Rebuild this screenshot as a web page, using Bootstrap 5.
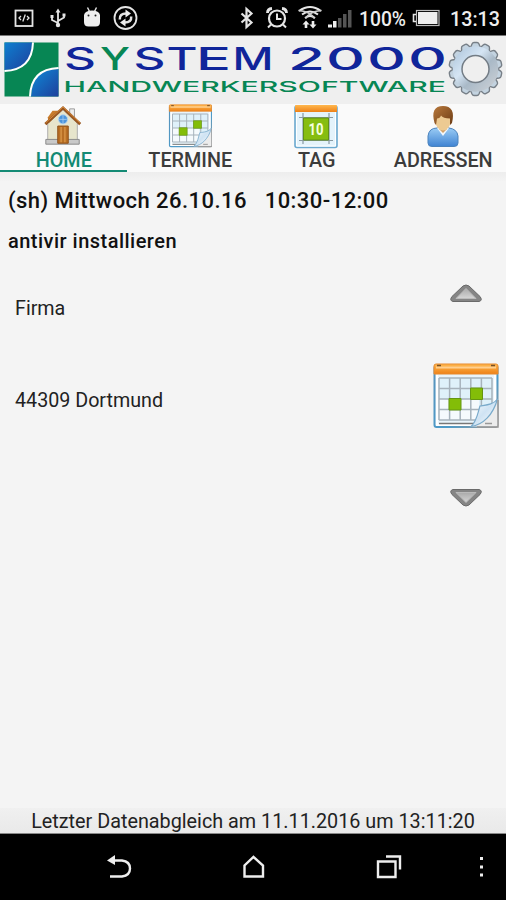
<!DOCTYPE html>
<html lang="de">
<head>
<meta charset="utf-8">
<meta name="viewport" content="width=device-width, initial-scale=1">
<title>System 2000 Handwerkersoftware</title>
<link href="https://cdn.jsdelivr.net/npm/bootstrap@5.3.0/dist/css/bootstrap.min.css" rel="stylesheet">
<style>
body{font-family:Roboto,"Liberation Sans",sans-serif;background:#f4f4f4;color:#111;line-height:1}
svg{display:block;flex:none}
.screen{height:900px;max-width:506px}
.status{height:36px;color:#eee;border-bottom:1px solid #777}
.brand-row{height:68px;background:#efefef}
.tabs{height:68px;background:#fafafa}
.tabs a{width:126.5px;height:68px;color:#3c3c3c;font-weight:500;font-size:19.8px;line-height:20px;text-decoration:none;border-bottom:0 solid #138a74}
.tabs a span{padding-top:1px;margin-left:1px}
.tabs a.active{color:#138a74;border-bottom-width:2px}
.strip{height:9px;background:linear-gradient(#ededed,#f3f3f3)}
.entry-title{font-size:22px;font-weight:500;white-space:pre;height:22px;line-height:24px;letter-spacing:.45px}
.entry-text{font-size:20px;font-weight:500;line-height:20px;letter-spacing:.48px;margin-top:20px}
.addr{font-size:19.7px;line-height:20px;color:#222}
.firm{margin-top:48px;margin-left:-1px}
.city{margin-top:72px;margin-left:-1px}
.sync{height:26px;background:linear-gradient(#f0f0f0,#e9e9e9);border-bottom:1px solid #888;font-size:19.8px;line-height:27px;color:#222}
.softkeys{height:66px}
.side{width:66px;margin-right:-1px}
.up{margin-top:32px}
.cal{margin-top:58px}
.down{margin-top:59px}
</style>
</head>
<body>
<svg width="0" height="0" class="position-absolute" aria-hidden="true">
 <defs>
  <linearGradient id="blue" x1="0" y1="0" x2="1" y2="1"><stop stop-color="#0e7fd0"/><stop offset="1" stop-color="#1e3f9c"/></linearGradient>
  <linearGradient id="blue2" x1="0" y1="0" x2="1" y2="1"><stop stop-color="#0e8bd8"/><stop offset="1" stop-color="#1e3f9c"/></linearGradient>
  <linearGradient id="orange" x1="0" y1="0" x2="0" y2="1"><stop stop-color="#ffb84f"/><stop offset="1" stop-color="#ee8117"/></linearGradient>
  <linearGradient id="steel" x1="0" y1="0" x2="1" y2="1"><stop stop-color="#b5cbe0"/><stop offset=".35" stop-color="#d5e5f4"/><stop offset=".6" stop-color="#a9b9c7"/><stop offset="1" stop-color="#c7cdd3"/></linearGradient>
  <linearGradient id="fold" x1="0" y1="0" x2="1" y2="1"><stop stop-color="#fff"/><stop offset=".5" stop-color="#cfe3f3"/><stop offset="1" stop-color="#fff"/></linearGradient>
  <linearGradient id="frame" x1="0" y1="0" x2="1" y2="1"><stop stop-color="#5a93bb"/><stop offset=".6" stop-color="#4c9ac8"/><stop offset="1" stop-color="#999"/></linearGradient>
  <linearGradient id="shirt" x1="0" y1="0" x2="0" y2="1"><stop stop-color="#9accf5"/><stop offset="1" stop-color="#3f83d2"/></linearGradient>
  <linearGradient id="hair" x1="0" y1="0" x2="1" y2="1"><stop stop-color="#b9793d"/><stop offset="1" stop-color="#6c3c14"/></linearGradient>
  <linearGradient id="grey" x1="0" y1="0" x2="0" y2="1"><stop stop-color="#aaa"/><stop offset="1" stop-color="#d5d5d5"/></linearGradient>
  <path id="tooth" d="M-5.500-20L-3.500-25Q-2.800-26.500-1.500-26.500h3Q2.800-26.500 3.500-25L5.500-20z"/>
  <g id="teeth7"><use href="#tooth"/><use href="#tooth" transform="rotate(25.714)"/><use href="#tooth" transform="rotate(51.429)"/><use href="#tooth" transform="rotate(77.143)"/><use href="#tooth" transform="rotate(102.857)"/><use href="#tooth" transform="rotate(128.571)"/><use href="#tooth" transform="rotate(154.286)"/></g>
  <symbol id="calendar" viewBox="0 0 66 66">
   <rect x="1.500" y="3" width="63" height="61" rx="2" fill="#e9f4fb" stroke="url(#frame)" stroke-width="2"/>
   <path d="M4 12v50h58V12" fill="none" stroke="#fff" stroke-width="2"/>
   <path d="M6 15h53v42H6z" fill="#dff1fa"/><path d="M6 36h40v21H6z" fill="#f5fafd"/>
   <path d="M6 15h53M6 25.500h53M6 36h53M6 46.500h42M6 57h36M6 15v42M16.600 15v42M27.200 15v42M37.800 15v42M48.400 15v34M59 15v25" fill="none" stroke="#a7b3bc" stroke-width="1.500"/>
   <path d="M6 60.500h53" stroke="#777" stroke-width="1.500"/>
   <path d="M16 35.500h12v11.500H16zM37.500 25h12v11.500h-12z" fill="#83bd08" stroke="#659612"/>
   <path d="M64.500 36C60 42 53 42 47 43c-2 6-3 15-9 20.500h25q2 0 2-2z" fill="#ececec"/>
   <path d="M64.500 36C60 42 53 42 47 43c-2 6-3 15-9 20.500C50 62 60 52 64.500 36z" fill="url(#fold)" stroke="#79aacb" stroke-width="1.200"/>
   <path d="M52 60.500h7M65 37v27H44" fill="none" stroke="#999" stroke-width="1.500"/>
   <path d="M3 1h60q2 0 2 2v8H1V3q0-2 2-2z" fill="url(#orange)" stroke="#e88b2f"/>
   <path d="M3 4.500h60" stroke="#ffcf8e" stroke-width="2"/><path d="M4 2.500h4M58 2.500h4" stroke="#775026" stroke-width="1.500"/>
  </symbol>
 </defs>
</svg>
<main class="screen d-flex flex-column overflow-hidden">
 <header class="status bg-black">
  <svg width="506" height="35" viewBox="0 0 506 35" fill="none" stroke="#e5e5e5" stroke-width="1.800" font-family="Roboto,sans-serif">
   <rect x="15.500" y="10.500" width="17" height="15.500"/><path d="M21 16l-2 2 2 2M27 16l2 2-2 2M25.300 14.500l-2.500 7" stroke-width="1.300"/>
   <path d="M58 11v14M52 17v3l6 3M64 15v2.500l-6 3.500" stroke-width="1.800"/><path d="M55.500 12.500L58 8.500l2.500 4zM50.500 15h3v3h-3zM62.500 13.500h3v3h-3z" fill="#e5e5e5" stroke="none"/><circle cx="58" cy="25" r="2.200" fill="#e5e5e5" stroke="none"/>
   <path d="M84 15q1-4.500 8-4.500t8 4.500v7q0 4.500-4.500 4.500h-7Q84 26.500 84 22z" fill="#eee" stroke="none"/><path d="M87.500 7.500l2 4M96.500 7.500l-2 4" stroke-width="1.400"/><circle cx="88.500" cy="15.500" r="1" fill="#222" stroke="none"/><circle cx="95.500" cy="15.500" r="1" fill="#222" stroke="none"/>
   <circle cx="125.500" cy="18" r="11"/><path d="M119.800 19.500q-.5-6 6.500-6M131.200 16.500q.5 6-6.500 6" stroke-width="2.500"/><path d="M125.500 9.500l5.500 4-5.500 4zM125.500 18.500l-5.500 4 5.500 4z" fill="#eee" stroke="none"/>
   <path d="M241.500 13.500l10 9-5 4.500V9l5 4.500-10 9" stroke-width="2.200"/>
   <circle cx="277" cy="18.500" r="8" stroke-width="2.200"/><path d="M277 13.500V19h4.500M271 24.500l-3 3M283 24.500l3 3" stroke-width="2"/><path d="M267.500 13q0-4 4.500-4.500M286.500 13q0-4-4.500-4.500" stroke-width="2.800"/>
   <path d="M299 11q11-8 22 0M302 14.500q8-6 16 0M305 18q5-4 10 0" stroke-width="2"/><path d="M298.500 10.500q11 .5 16 8M321.500 10.500q-11 .5-16 8" stroke="#ccc" stroke-width="1.400"/>
   <path d="M302.500 24.500l3.500-4 3.500 4h-2.200v3.500h-2.600v-3.500zM311.700 21h2.600v3.500h2.200l-3.500 4-3.500-4h2.200z" fill="#eee" stroke="none"/>
   <path d="M328 24.500h4v3h-4zM333 21h3.500v6.500H333z" fill="#eee" stroke="none"/><path d="M338 18h3.500v9.500H338zM343 14h3.500v13.500H343zM348 10h3.500v17.500H348z" fill="#555" stroke="none"/>
   <rect x="416.500" y="10.500" width="22.500" height="15" stroke-width="1.200" stroke="#bbb"/><path d="M418 12h19.500v12H418z" fill="#eee" stroke="none"/><path d="M416 14.500h-2.500v7h2.500" stroke-width="1.600"/>
   <g fill="#eee" stroke="none" font-weight="500"><text x="359" y="26" font-size="19.500" textLength="47" lengthAdjust="spacingAndGlyphs">100%</text><text x="450" y="26" font-size="20" textLength="50" lengthAdjust="spacingAndGlyphs">13:13</text></g>
  </svg>
 </header>
 <div class="brand-row">
  <svg width="506" height="68" viewBox="0 36 506 68">
   <path d="M4.500 42.500h54v54h-54z" fill="#078654"/>
   <path d="M4.500 42.500H32Q32 70 4.500 70z" fill="url(#blue)"/><path d="M58.500 96.500H31Q32 69 58.500 69z" fill="url(#blue2)"/>
   <path d="M33 42.500Q32 70 4.500 71M30 96.500Q31 69 58.500 68" fill="none" stroke="#fff" stroke-width="2"/>
   <g font-family="Inter,sans-serif" font-size="31" font-weight="500" fill="#10259a">
    <text y="70" x="64" textLength="32" lengthAdjust="spacingAndGlyphs">S</text>
    <text y="70" x="100" textLength="30" lengthAdjust="spacingAndGlyphs" fill="#078654">Y</text>
    <text y="70" x="133.500" textLength="32" lengthAdjust="spacingAndGlyphs">S</text>
    <text y="70" x="166.500" textLength="31" lengthAdjust="spacingAndGlyphs">T</text>
    <text y="70" x="196" textLength="35" lengthAdjust="spacingAndGlyphs">E</text>
    <text y="70" x="232.500" textLength="41" lengthAdjust="spacingAndGlyphs">M</text>
    <text y="70" x="288" textLength="37" lengthAdjust="spacingAndGlyphs">2</text>
    <text y="70" x="326" textLength="39" lengthAdjust="spacingAndGlyphs">0</text>
    <text y="70" x="367" textLength="39" lengthAdjust="spacingAndGlyphs">0</text>
    <text y="70" x="408" textLength="39" lengthAdjust="spacingAndGlyphs">0</text>
   </g>
   <text x="63.500" y="91.500" font-family="Inter,sans-serif" font-size="14.500" font-weight="500" fill="#078654" textLength="382.500" lengthAdjust="spacingAndGlyphs">HANDWERKERSOFTWARE</text>
   <g transform="translate(475.500 69)">
    <g fill="#c3d3e0" stroke="#777f87" stroke-width="1.400"><use href="#teeth7"/><use href="#teeth7" transform="rotate(180)"/></g>
    <circle r="18" fill="none" stroke="url(#steel)" stroke-width="9.500"/>
    <circle r="13.500" fill="#efefef" stroke="#737c85" stroke-width="1.500"/>
   </g>
  </svg>
 </div>
 <nav class="tabs d-flex">
  <a href="#" class="active d-flex flex-column align-items-center">
   <svg width="42" height="46" viewBox="42 103 44 48">
    <path d="M71 108h5v15h-5z" fill="#eee" stroke="#999"/><path d="M48 123l16-14 15 14v21H48z" fill="#e7e5cc" stroke="#aaa"/>
    <path d="M46 140h35v5H46z" fill="#c9c9c9" stroke="#888"/>
    <path d="M48 117l5-7 9 0-13 13z" fill="#c87b2b"/>
    <path d="M45.500 124L64 107l18 17" fill="none" stroke="#9a5720" stroke-width="3"/><path d="M46 122.500L64 106l17.500 16.500" fill="none" stroke="#d88c3c" stroke-width="1"/>
    <circle cx="64" cy="119" r="4.800" fill="#4c95dc" stroke="#b7d6ee"/><path d="M64 115v8M60 119h8" stroke="#a9d0f2" stroke-width=".8"/>
    <path d="M58.500 126h11v18h-11z" fill="#b86f24" stroke="#8d4d13"/><path d="M62 127v16M66 127v16" stroke="#dd9a4b" stroke-width="1.300"/>
   </svg><span>HOME</span></a>
  <a href="#" class="d-flex flex-column align-items-center"><svg width="44" height="46" viewBox="0 0 44 46"><use href="#calendar" x=".5" width="44" height="44"/></svg><span>TERMINE</span></a>
  <a href="#" class="d-flex flex-column align-items-center">
   <svg width="44" height="46" viewBox="0 0 44 46"><rect x="1" y="2" width="42" height="41.500" rx="2" fill="#e4f3fb" stroke="#6ba9cf" stroke-width="1.600"/><path d="M2.500 7v35h39V7" fill="none" stroke="#fff"/>
    <path d="M5 13.500h34M5 36.500h34M9 9v31M35 9v31" stroke="#8999a2" stroke-width="1.200"/><path d="M9.500 14h25v22h-25z" fill="#86bd10" stroke="#609018"/><path d="M2 1h40q1 0 1 1v6H1V2q0-1 1-1z" fill="url(#orange)"/>
    <text x="22" y="31" text-anchor="middle" font-family="Roboto,sans-serif" font-size="17" font-weight="700" fill="#f4ffe0" textLength="15" lengthAdjust="spacingAndGlyphs">10</text></svg><span>TAG</span></a>
  <a href="#" class="d-flex flex-column align-items-center">
   <svg width="44" height="46" viewBox="0 0 44 46"><path d="M7 39V32q1-8 9-8h12q8 1 9 8v7q0 3.500-4 3.500H11q-4 0-4-3.500z" fill="url(#shirt)" stroke="#4b83bd"/><path d="M16 24l6 8 6-8z" fill="#f2f7fb"/>
    <path d="M18 22h8v3l-4 4-4-4z" fill="#d1a168"/><ellipse cx="22" cy="17" rx="7.500" ry="9.500" fill="#edca92"/>
    <path d="M13.500 19Q9 2 22 2T31 19l-2 2V14.500q-7 0-9-3-1 3-4 3l-1 6.500z" fill="url(#hair)"/></svg><span>ADRESSEN</span></a>
 </nav>
 <div class="strip"></div>
 <section class="flex-grow-1 px-2">
  <div class="entry-title mt-2">(sh) Mittwoch 26.10.16   10:30-12:00</div>
  <div class="entry-text">antivir installieren</div>
  <div class="d-flex justify-content-between">
   <div class="addr ms-2"><div class="firm">Firma</div><div class="city">44309 Dortmund</div></div>
   <div class="side d-flex flex-column align-items-center">
    <svg class="up" width="34" height="22" viewBox="0 0 34 22"><path d="M4 18.500Q0 17.500 3 13.500L14 3q3-2 6 0l11 10.500q3 4-1 5z" fill="#858585" stroke="#6a6a6a"/><path d="M7 15.500l10-10 10 10z" fill="url(#grey)" stroke="#bbb"/></svg>
    <svg class="cal" width="66" height="66"><use href="#calendar" width="66" height="66"/></svg>
    <svg class="down" width="34" height="22" viewBox="0 0 34 22"><path d="M4 1.500Q0 2.500 3 6.500L14 17q3 2 6 0L31 6.500q3-4-1-5z" fill="#858585" stroke="#6a6a6a"/><path d="M7 4.500l10 10 10-10z" fill="url(#grey)" stroke="#bbb"/></svg>
   </div>
  </div>
 </section>
 <div class="sync text-center">Letzter Datenabgleich am 11.11.2016 um 13:11:20</div>
 <footer class="softkeys bg-black">
  <svg width="506" height="66" viewBox="0 834 506 66" fill="none" stroke="#eee" stroke-width="2.400">
   <path d="M110 876.500h12q8-1 8-8t-8-8h-10"/><path d="M107 860.500l8-5.500v10z" fill="#eee" stroke="none"/>
   <path d="M244.500 876.500v-11l9-8.500 9.500 8.500v11z"/><path d="M378 861.500h17.500v15.500H378zM386 856.500h14v13"/>
   <path d="M480 857h3v3h-3zM480 865.500h3v3h-3zM480 873.500h3v3h-3z" fill="#eee" stroke="none"/>
  </svg>
 </footer>
</main>
<script src="https://cdn.jsdelivr.net/npm/bootstrap@5.3.0/dist/js/bootstrap.bundle.min.js"></script>
</body>
</html>
